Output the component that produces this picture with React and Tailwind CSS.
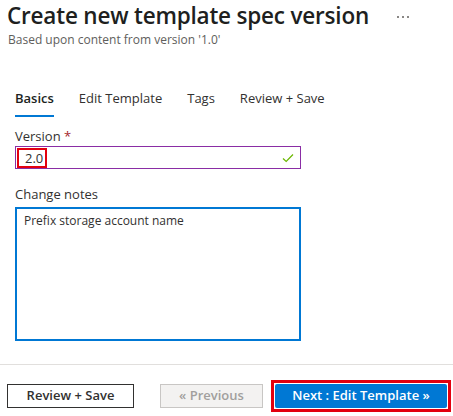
import React from "react";

const FONT = { fontFamily: '"Segoe UI", "Open Sans", "Noto Sans", sans-serif' };

const tabs = ["Basics", "Edit Template", "Tags", "Review + Save"];

export default function App() {
  return (
    <div className="w-[453px] h-[416px] bg-white flex flex-col text-[#323130] overflow-hidden" style={FONT}>
      {/* header */}
      <div className="flex items-start pl-[7px] pt-[2px]">
        <h1 className="text-[22.5px] leading-[28px] font-semibold text-[#201f1e] tracking-[-0.2px]">
          Create new template spec version
        </h1>
        <div className="flex gap-[3px] ml-[28px] mt-[14px]">
          <span className="w-[2px] h-[2px] bg-[#8a8886]" />
          <span className="w-[2px] h-[2px] bg-[#8a8886]" />
          <span className="w-[2px] h-[2px] bg-[#8a8886]" />
        </div>
      </div>
      <div className="pl-[8px] mt-[3px] text-[12px] leading-[14px] text-[#605e5c]">
        Based upon content from version '1.0'
      </div>

      {/* tabs */}
      <div className="flex gap-[25px] pl-[15px] mt-[41px] text-[13px] leading-[20px]">
        {tabs.map((t, i) => (
          <div key={t} className="flex flex-col">
            <span className={i === 0 ? "font-semibold text-[#201f1e]" : "text-[#323130]"}>{t}</span>
            <span className={"h-[2px] mt-[7px] " + (i === 0 ? "bg-[#0078d4]" : "bg-transparent")} />
          </div>
        ))}
      </div>

      {/* form */}
      <div className="pl-[15px] mt-[11px] w-[301px] flex flex-col">
        <label className="text-[13px] leading-[16px]">
          Version <span className="text-[#a4262c]">*</span>
        </label>
        <div className="mt-[2px] h-[23px] border border-[#8a2da5] flex items-center relative">
          <span className="ml-[1px] border-2 border-[#e3000f] h-[20px] w-[30px] text-[13px] leading-[16px] flex items-center pl-[6px]">
            2.0
          </span>
          <svg className="ml-auto mr-[6px]" width="12" height="10" viewBox="0 0 12 10">
            <path d="M1 5.5 L4.2 8.5 L11 1.5" fill="none" stroke="#6bb700" strokeWidth="1.2" />
          </svg>
        </div>

        <label className="mt-[17px] text-[13px] leading-[16px]">Change notes</label>
        <div className="mt-[5px] h-[134px] border-2 border-[#0078d4] px-[7px] pt-[3px] text-[12px] leading-[18px]">
          Prefix storage account name
        </div>
      </div>

      {/* footer */}
      <div className="mt-[23px] border-t border-[#e1dfdd]" />
      <div className="flex items-center pl-[7px] mt-[15px] text-[13px] font-semibold">
        <button className="w-[127px] h-[24px] border border-[#323130] text-[#323130] bg-white">
          Review + Save
        </button>
        <button className="ml-[26px] w-[103px] h-[24px] border border-[#c8c6c4] bg-[#f3f2f1] text-[#a19f9d]">
          « Previous
        </button>
        <div className="ml-[8px] border-[3px] border-[#e3000f] p-[1px]">
          <button className="w-[172px] h-[24px] bg-[#0078d4] text-white rounded-[2px]">
            Next : Edit Template »
          </button>
        </div>
      </div>
    </div>
  );
}
